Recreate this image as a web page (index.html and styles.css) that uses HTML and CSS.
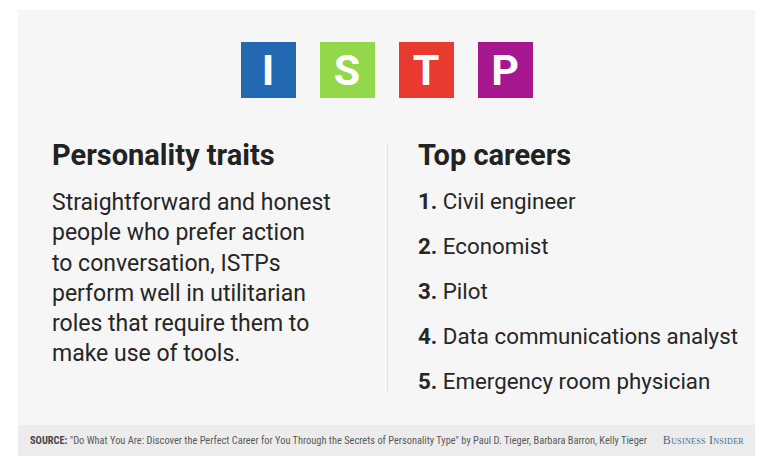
FILE: index.html
```html
<!DOCTYPE html>
<html lang="en">
<head>
<meta charset="utf-8">
<title>ISTP</title>
<link rel="stylesheet" href="styles.css">
</head>
<body>
<div class="card">
  <div class="main">
    <div class="tiles">
      <div class="tile tile-i">I</div>
      <div class="tile tile-s">S</div>
      <div class="tile tile-t">T</div>
      <div class="tile tile-p">P</div>
    </div>
    <div class="columns">
      <div class="col col-left">
        <h2 class="heading">Personality traits</h2>
        <p class="body">Straightforward and honest<br>people who prefer action<br>to conversation, ISTPs<br>perform well in utilitarian<br>roles that require them to<br>make use of tools.</p>
      </div>
      <div class="divider"></div>
      <div class="col col-right">
        <h2 class="heading">Top careers</h2>
        <ol class="careers">
          <li><b>1.</b> Civil engineer</li>
          <li><b>2.</b> Economist</li>
          <li><b>3.</b> Pilot</li>
          <li><b>4.</b> Data communications analyst</li>
          <li><b>5.</b> Emergency room physician</li>
        </ol>
      </div>
    </div>
  </div>
  <div class="footer">
    <span class="source"><b>SOURCE:</b> "Do What You Are: Discover the Perfect Career for You Through the Secrets of Personality Type" by Paul D. Tieger, Barbara Barron, Kelly Tieger</span>
    <span class="brand">Business Insider</span>
  </div>
</div>
</body>
</html>
```
FILE: styles.css
```css
html, body {
  margin: 0;
  padding: 0;
  background: #ffffff;
}
body {
  font-family: Roboto, "Liberation Sans", sans-serif;
  color: #262626;
}
.card {
  margin: 10px 0 0 18px;
  width: 737px;
  background: #f6f6f6;
}
.main {
  height: 415px;
  padding-top: 32px;
  box-sizing: border-box;
}
.tiles {
  display: flex;
  justify-content: center;
  gap: 24px;
}
.tile {
  width: 55px;
  height: 56px;
  color: #ffffff;
  font-weight: 700;
  font-size: 43px;
  line-height: 56px;
  text-align: center;
}
.tile-i { background: #2369b2; }
.tile-s { background: #92d84a; }
.tile-t { background: #e93a30; }
.tile-p { background: #a6168f; }
.columns {
  display: flex;
  margin-top: 41px;
  padding-left: 34px;
}
.col-left {
  width: 335px;
}
.divider {
  width: 1px;
  height: 250px;
  margin-top: 4px;
  background: #e2e2e2;
}
.col-right {
  padding-left: 30px;
}
.heading {
  margin: 0;
  font-size: 29px;
  line-height: 32px;
  font-weight: 700;
  color: #222222;
}
.body {
  margin: 17px 0 0;
  font-size: 23px;
  line-height: 30.3px;
}
.careers {
  list-style: none;
  margin: 8px 0 0;
  padding: 0;
}
.careers li {
  font-size: 22.3px;
  line-height: 45px;
}
.careers b {
  font-weight: 700;
}
.footer {
  display: flex;
  align-items: center;
  justify-content: space-between;
  height: 31px;
  padding: 0 11px 0 12px;
  background: #ececec;
}
.source {
  font-family: "Liberation Sans Narrow", "Roboto Condensed", Roboto, sans-serif;
  font-size: 10.4px;
  color: #5a5a5a;
  white-space: nowrap;
}
.source b {
  color: #444444;
}
.brand {
  font-family: "Liberation Serif", serif;
  font-variant: small-caps;
  font-size: 12px;
  letter-spacing: 0.3px;
  color: #3d6b8c;
  white-space: nowrap;
}
```
